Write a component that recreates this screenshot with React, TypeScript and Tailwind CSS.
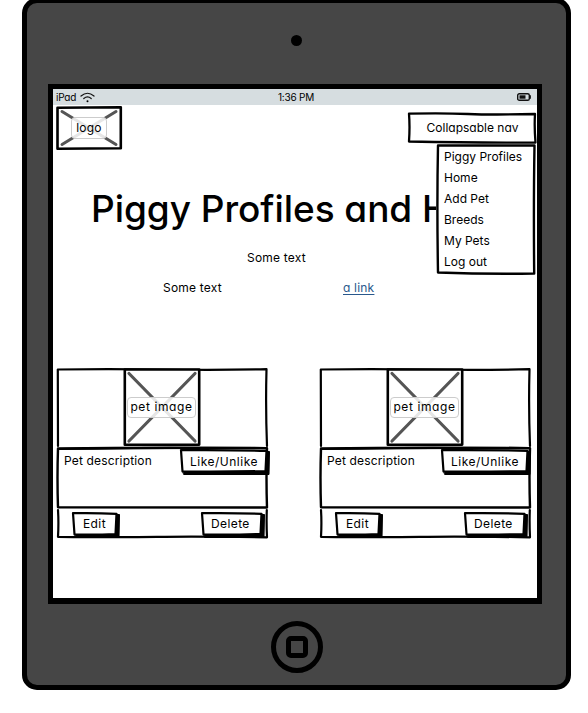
import React from 'react';

const BODY = "text-[12px] leading-5 whitespace-nowrap";

function Art({ w, h, children }: { w: number; h: number; children: React.ReactNode }) {
  return (
    <svg
      className="pointer-events-none absolute left-0 top-0 overflow-visible"
      width={w}
      height={h}
      viewBox={`0 0 ${w} ${h}`}
      fill="none"
      stroke="#000"
      strokeLinecap="round"
      strokeLinejoin="round"
    >
      {children}
    </svg>
  );
}

function SketchButton({ w, h, label, className }: { w: number; h: number; label: string; className: string }) {
  return (
    <button className={`relative flex items-center ${BODY} ${className}`}>
      <Art w={w} h={h}>
        <path d={`M3 ${h - 4}L${w - 5} ${h - 4}L${w - 4} 2.5L${w - 0.5} 2.5L${w - 1} ${h - 0.5}L4 ${h - 0.5}Z`} fill="#000" strokeWidth="1" />
        <path d={`M1 1.2Q${w / 2} 0.8 ${w - 3.5} 1.8L${w - 4.5} ${h - 4}Q${w / 2} ${h - 3} 2.5 ${h - 3.5}Z`} fill="#fff" strokeWidth="2.2" />
      </Art>
      <span className="relative">{label}</span>
    </button>
  );
}

function PetCard({ likeOffset }: { likeOffset: string }) {
  return (
    <article className="relative flex h-[170px] w-[211px] shrink-0 flex-col">
      <Art w={211} h={170}>
        <path d="M1 78L0.8 1.5Q50 0.7 105 1.5T209.5 1.2Q208.5 40 210 78" strokeWidth="2.2" />
        <path d="M1 80.5Q105 79 210 80.3Q209 110 210 139.5Q105 139.8 1 139.3Q0 110 1 80.5Z" strokeWidth="2.4" />
        <path d="M1 81Q100 79.5 209 80" strokeWidth="2.2" />
        <path d="M1 142Q1.8 155 1 168.8Q60 169.5 100 168.9T210 169.3Q209.3 155 209.8 142" strokeWidth="2.2" />
      </Art>
      <div className="flex h-[79px] justify-center">
        <div className="relative flex h-[78px] w-[77px] items-center justify-center">
          <Art w={77} h={78}>
            <path d="M0.8 1.5H75.2V76.6L0.8 76.8Z" strokeWidth="2.6" fill="#fff" />
            <path d="M5 5.5L71 73M71 5.5L5 73" stroke="#555" strokeWidth="3.2" />
          </Art>
          <span className={`relative -left-px rounded-[4px] border border-[#ccc] bg-white/85 text-center ${BODY} h-[21px] w-[69px] leading-[18px] tracking-[0.6px]`}>pet image</span>
        </div>
      </div>
      <div className="flex h-[62px] items-start justify-between pl-[7px] pt-[2px]">
        <p className={`${BODY} pt-[2px] tracking-[0.16px]`}>Pet description</p>
        <SketchButton w={90} h={26} label="Like/Unlike" className={`h-[26px] w-[90px] pb-px pl-[10px] tracking-[0.5px] ${likeOffset}`} />
      </div>
      <div className="flex h-[29px] items-start justify-between pl-[15px] pr-[3px] pt-[3px]">
        <SketchButton w={48} h={26} label="Edit" className="h-[26px] w-[48px] pb-[2px] pl-[11px] tracking-[0.4px]" />
        <SketchButton w={64} h={26} label="Delete" className="h-[26px] w-[64px] pb-[2px] pl-[10px] tracking-[0.4px]" />
      </div>
    </article>
  );
}

export default function App() {
  const links = ['Piggy Profiles', 'Home', 'Add Pet', 'Breeds', 'My Pets', 'Log out'];
  return (
    <div className="h-[713px] w-[588px] overflow-hidden bg-white pl-[22px] font-[Inter,sans-serif] text-black [font-feature-settings:'cv11']">
      <div className="-mt-[2px] flex h-[692px] w-[549px] flex-col items-center rounded-[15px] border-[5px] border-black bg-[#464646]">
        <div className="mt-[32px] h-[11px] w-[11px] shrink-0 rounded-full bg-black" />
        <div className="-ml-[3px] mt-[38px] flex h-[520px] w-[494px] shrink-0 flex-col border-[5px] border-b-[6px] border-black bg-white">
          <div className="grid h-4 shrink-0 grid-cols-3 items-center bg-[#d6dde0] pl-[3px] pr-[6px] text-[10px] leading-4">
            <div className="flex items-center gap-[4px] tracking-[-0.2px]">
              <span>iPad</span>
              <svg width="15" height="11" viewBox="0 0 15 11" fill="none" stroke="#111" strokeWidth="1.2" strokeLinecap="round">
                <path d="M1 4Q7.5 -1.5 14 4M3.8 6.5Q7.5 3.3 11.2 6.5" />
                <circle cx="7.5" cy="9.2" r="1" fill="#000" stroke="none" />
              </svg>
            </div>
            <span className="pl-[5px] text-center tracking-[-0.2px]">1:36 PM</span>
            <svg className="justify-self-end" width="14" height="8" viewBox="0 0 14 8" fill="none" stroke="#111">
              <rect x="0.7" y="0.7" width="11.6" height="6.6" rx="1.6" strokeWidth="1.4" />
              <path d="M13.2 2.2V5.8" strokeWidth="1.4" />
              <rect x="2.5" y="2.3" width="6" height="3.4" fill="#111" stroke="none" />
            </svg>
          </div>
          <header className="flex h-[45px] shrink-0 items-start justify-between pl-[3px]">
            <div className="relative mt-px flex h-[44px] w-[66px] items-center justify-center">
              <Art w={66} h={44}>
                <path d="M1.5 1.7L64.8 1.2V42.2L1.5 42.7Z" strokeWidth="2.6" />
                <path d="M6 5.5L60 38.5M60 5.5L6 38.5" stroke="#555" strokeWidth="3" />
              </Art>
              <span className={`relative h-[22px] w-[36px] rounded-[4px] border border-[#ccc] bg-white/85 text-center ${BODY} leading-[20px] tracking-[0.2px]`}>logo</span>
            </div>
            <nav className={`relative mt-[7px] flex h-[32px] w-[129px] items-center justify-center ${BODY}`}>
              <Art w={129} h={32}>
                <path d="M1 1.7Q35 1 60 2T127 2Q126.2 15 127.5 30.5Q70 31 1 29.5Q2 15 1 1.7Z" strokeWidth="2.3" />
              </Art>
              <span className="relative pb-px">Collapsable nav</span>
              <ul className="absolute right-0 top-[32px] z-10 h-[131px] w-[101px] bg-white pl-[8px] pt-[2px] leading-[21px]">
                <Art w={101} h={131}>
                  <path d="M2 1.5L98.5 1.5Q97.5 60 98.2 129.5Q50 130.2 2 128.5Q0.8 60 2 1.5Z" strokeWidth="2.4" />
                </Art>
                {links.map((l) => <li key={l} className="h-[21px]">{l}</li>)}
              </ul>
            </nav>
          </header>
          <h1 className="mt-[35px] h-12 shrink-0 whitespace-nowrap pl-[38px] text-[37px] font-medium leading-[48px] tracking-[-0.05px]">Piggy Profiles and H</h1>
          <p className={`mt-[15px] pl-[194px] ${BODY} tracking-[0.2px]`}>Some text</p>
          <div className={`mt-[10px] flex pl-[110px] ${BODY} tracking-[0.2px]`}>
            <span className="w-[180px]">Some text</span>
            <a className="text-[#29588c] underline underline-offset-2">a link</a>
          </div>
          <main className="mt-[70px] flex gap-[52px] pl-1">
            <PetCard likeOffset="-mr-[2px]" />
            <PetCard likeOffset="mr-0" />
          </main>
        </div>
        <div className="mt-[17px] flex h-[52px] w-[52px] shrink-0 items-center justify-center rounded-full border-[5px] border-black">
          <div className="h-[22px] w-[22px] rounded-[5px] border-[5px] border-black" />
        </div>
      </div>
    </div>
  );
}
